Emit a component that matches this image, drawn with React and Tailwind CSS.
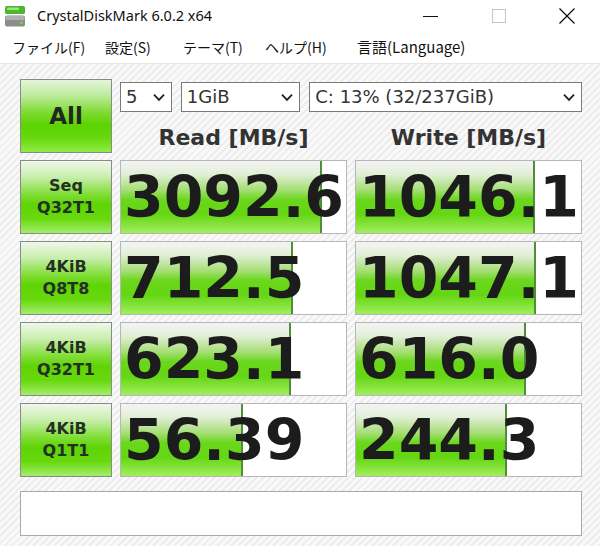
import React from "react";

const rows = [
  { l1: "Seq", l2: "Q32T1", r: "3092.6", rw: 201, w: "1046.1", ww: 179 },
  { l1: "4KiB", l2: "Q8T8", r: "712.5", rw: 172, w: "1047.1", ww: 180 },
  { l1: "4KiB", l2: "Q32T1", r: "623.1", rw: 170, w: "616.0", ww: 170 },
  { l1: "4KiB", l2: "Q1T1", r: "56.39", rw: 122, w: "244.3", ww: 151 },
];

function Chevron({ className }) {
  return (
    <svg viewBox="0 0 12 8" className={className} fill="none" stroke="#222" strokeWidth="1.8">
      <polyline points="1,1.2 6,6.4 11,1.2" />
    </svg>
  );
}

function Select({ text, w }) {
  return (
    <div
      className={`${w} h-[30px] bg-white border border-[#7a7a7a] flex items-center justify-between pl-[5px] pr-[6px] text-[18px] text-[#333] leading-none`}
      style={{ fontFamily: '"DejaVu Sans", sans-serif' }}
    >
      <span>{text}</span>
      <Chevron className="w-[12px] h-[9px]" />
    </div>
  );
}

function Label({ a, b }) {
  return (
    <div
      className="h-[74px] border border-[#8a8a8a] bg-[linear-gradient(to_bottom,#eef8e8_0%,#c9eeae_22%,#84de3c_45%,#5fd404_60%,#68d90e_80%,#a4ee6a_100%)] flex flex-col items-center justify-center text-[16px] font-bold text-[#233023] leading-[22px]"
      style={{ fontFamily: '"DejaVu Sans", sans-serif' }}
    >
      <span>{a}</span>
      <span>{b}</span>
    </div>
  );
}

function Value({ v, fill }) {
  return (
    <div className="relative h-[74px] border border-[#b6b6b6] bg-white overflow-hidden flex items-center pl-[3px]">
      <div
        className="absolute left-0 top-0 bottom-0 border-r-2 border-[#4f8f3a] bg-[linear-gradient(to_bottom,#f4f4f4_0%,#e2efd8_18%,#a6de76_40%,#6ad71c_54%,#64d612_74%,#a2ee5e_100%)]"
        style={{ width: fill }}
      />
      <span
        className="relative text-[57px] font-bold text-[#1c1c1c] leading-none"
        style={{ fontFamily: '"DejaVu Sans", sans-serif' }}
      >
        {v}
      </span>
    </div>
  );
}

export default function App() {
  const jp = { fontFamily: '"Noto Sans CJK JP", "Noto Sans", sans-serif' };
  return (
    <div className="w-[600px] h-[546px] flex flex-col overflow-hidden bg-white">
      {/* title bar */}
      <div className="h-[32px] flex items-center bg-white shrink-0">
        <div className="w-[37px] h-[32px] flex items-center pl-[5px]">
          <svg viewBox="0 0 20 21" className="w-[20px] h-[21px]">
            <rect x="0" y="0" width="20" height="8" rx="1.5" fill="#4fb531" />
            <rect x="2" y="1.5" width="12" height="2.5" rx="1" fill="#9de67a" />
            <rect x="0" y="9.5" width="20" height="11" rx="2" fill="#8c8c8c" />
            <rect x="0.5" y="10" width="19" height="4" rx="1.5" fill="#b0b0b0" />
            <rect x="15" y="15.5" width="3" height="2.5" fill="#69d63a" />
          </svg>
        </div>
        <span className="text-[14.5px] text-[#111]" style={{ fontFamily: '"Noto Sans", sans-serif' }}>
          CrystalDiskMark 6.0.2 x64
        </span>
        <div className="flex-1" />
        <div className="w-[69px] h-[32px] flex items-center justify-center">
          <div className="w-[15px] h-[1px] bg-[#111]" />
        </div>
        <div className="w-[68px] h-[32px] flex items-center justify-center">
          <div className="w-[14px] h-[14px] border border-[#c4c4c4]" />
        </div>
        <div className="w-[67px] h-[32px] flex items-center justify-center">
          <svg viewBox="0 0 16 16" className="w-[16px] h-[16px]" stroke="#111" strokeWidth="1.2">
            <line x1="0.5" y1="0.5" x2="15.5" y2="15.5" />
            <line x1="15.5" y1="0.5" x2="0.5" y2="15.5" />
          </svg>
        </div>
      </div>
      {/* menu bar */}
      <div className="h-[32px] flex items-center bg-white border-b border-[#e6e6e6] shrink-0 pl-[12px] text-[14px] text-[#111]" style={jp}>
        <span className="w-[93px]">ファイル(F)</span>
        <span className="w-[78px]">設定(S)</span>
        <span className="w-[82px]">テーマ(T)</span>
        <span className="w-[92px]">ヘルプ(H)</span>
        <span className="text-[15px]">言語(Language)</span>
      </div>
      {/* content */}
      <div className="flex-1 bg-[repeating-linear-gradient(135deg,#f9f9f9_0px,#f9f9f9_3px,#ededed_3px,#ededed_5px)] pl-[20px] pt-[15px]">
        <div className="grid grid-cols-[92px_227px_227px] gap-x-[8px] gap-y-[7px]">
          <div
            className="h-[74px] border border-[#8a8a8a] bg-[linear-gradient(to_bottom,#e4f5da_0%,#bdeb9b_22%,#7edb34_45%,#5dd302_62%,#66d80c_80%,#90eb46_100%)] flex items-center justify-center text-[23px] font-bold text-[#202820]"
            style={{ fontFamily: '"DejaVu Sans", sans-serif' }}
          >
            All
          </div>
          <div className="col-span-2 flex flex-col">
            <div className="flex gap-[9px] mt-[3px]">
              <Select text="5" w="w-[52px]" />
              <Select text="1GiB" w="w-[120px]" />
              <Select text="C: 13% (32/237GiB)" w="w-[274px]" />
            </div>
            <div
              className="grid grid-cols-[227px_227px] gap-x-[8px] mt-[13px] text-[22px] font-bold text-[#333] leading-[26px]"
              style={{ fontFamily: '"DejaVu Sans", sans-serif' }}
            >
              <div className="text-center">Read [MB/s]</div>
              <div className="text-center">Write [MB/s]</div>
            </div>
          </div>
          {rows.map((r, i) => (
            <React.Fragment key={i}>
              <Label a={r.l1} b={r.l2} />
              <Value v={r.r} fill={r.rw} />
              <Value v={r.w} fill={r.ww} />
            </React.Fragment>
          ))}
        </div>
        <div className="w-[562px] h-[45px] mt-[14px] bg-white border border-[#a8a8a8]" />
      </div>
    </div>
  );
}
